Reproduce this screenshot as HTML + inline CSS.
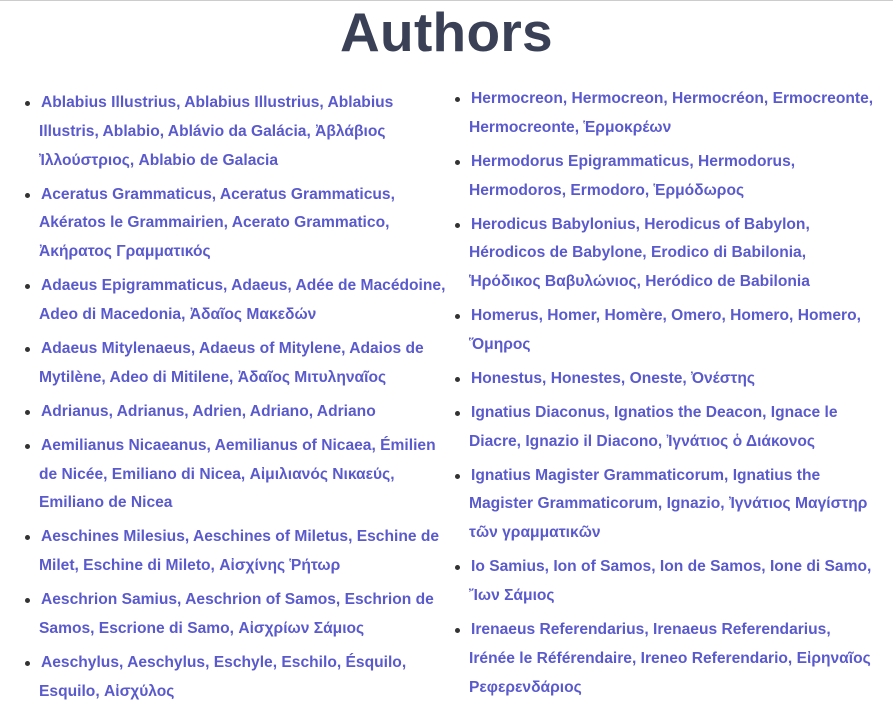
<!DOCTYPE html>
<html><head><meta charset="utf-8"><style>
html,body{margin:0;padding:0;background:#fff;width:893px;height:701px;overflow:hidden;position:relative}
body{border-top:1px solid #ccc;box-sizing:border-box}
h1{position:absolute;left:0;width:893px;top:-4px;margin:0;text-align:center;font:bold 55px/70px "Liberation Sans",sans-serif;color:#3a4156;letter-spacing:0.3px}
ul{position:absolute;margin:0;padding:0;list-style:none;font:bold 15.6px/28.8px "Liberation Sans","DejaVu Sans",sans-serif;color:#5a5acd}
li{position:relative;margin-bottom:5.2px;white-space:nowrap}
li:before{content:"";position:absolute;left:-14px;top:12px;width:5px;height:5px;border-radius:50%;background:#333}
li span{display:block}
li span:first-child{padding-left:2px}
.l{left:39px;top:88px}
.r{left:469px;top:84px}
</style></head><body>
<h1>Authors</h1>
<ul class="l">
<li><span>Ablabius Illustrius, Ablabius Illustrius, Ablabius</span><span>Illustris, Ablabio, Ablávio da Galácia, Ἀβλάβιος</span><span>Ἰλλούστριος, Ablabio de Galacia</span></li>
<li><span>Aceratus Grammaticus, Aceratus Grammaticus,</span><span>Akératos le Grammairien, Acerato Grammatico,</span><span>Ἀκήρατος Γραμματικός</span></li>
<li><span>Adaeus Epigrammaticus, Adaeus, Adée de Macédoine,</span><span>Adeo di Macedonia, Ἀδαῖος Μακεδών</span></li>
<li><span>Adaeus Mitylenaeus, Adaeus of Mitylene, Adaios de</span><span>Mytilène, Adeo di Mitilene, Ἀδαῖος Μιτυληναῖος</span></li>
<li><span>Adrianus, Adrianus, Adrien, Adriano, Adriano</span></li>
<li><span>Aemilianus Nicaeanus, Aemilianus of Nicaea, Émilien</span><span>de Nicée, Emiliano di Nicea, Αἰμιλιανός Νικαεύς,</span><span>Emiliano de Nicea</span></li>
<li><span>Aeschines Milesius, Aeschines of Miletus, Eschine de</span><span>Milet, Eschine di Mileto, Αἰσχίνης Ῥήτωρ</span></li>
<li><span>Aeschrion Samius, Aeschrion of Samos, Eschrion de</span><span>Samos, Escrione di Samo, Αἰσχρίων Σάμιος</span></li>
<li><span>Aeschylus, Aeschylus, Eschyle, Eschilo, Ésquilo,</span><span>Esquilo, Αἰσχύλος</span></li>
</ul>
<ul class="r">
<li><span>Hermocreon, Hermocreon, Hermocréon, Ermocreonte,</span><span>Hermocreonte, Ἑρμοκρέων</span></li>
<li><span>Hermodorus Epigrammaticus, Hermodorus,</span><span>Hermodoros, Ermodoro, Ἑρμόδωρος</span></li>
<li><span>Herodicus Babylonius, Herodicus of Babylon,</span><span>Hérodicos de Babylone, Erodico di Babilonia,</span><span>Ἡρόδικος Βαβυλώνιος, Heródico de Babilonia</span></li>
<li><span>Homerus, Homer, Homère, Omero, Homero, Homero,</span><span>Ὅμηρος</span></li>
<li><span>Honestus, Honestes, Oneste, Ὀνέστης</span></li>
<li><span>Ignatius Diaconus, Ignatios the Deacon, Ignace le</span><span>Diacre, Ignazio il Diacono, Ἰγνάτιος ὁ Διάκονος</span></li>
<li><span>Ignatius Magister Grammaticorum, Ignatius the</span><span>Magister Grammaticorum, Ignazio, Ἰγνάτιος Μαγίστηρ</span><span>τῶν γραμματικῶν</span></li>
<li><span>Io Samius, Ion of Samos, Ion de Samos, Ione di Samo,</span><span>Ἴων Σάμιος</span></li>
<li><span>Irenaeus Referendarius, Irenaeus Referendarius,</span><span>Irénée le Référendaire, Ireneo Referendario, Εἰρηναῖος</span><span>Ρεφερενδάριος</span></li>
</ul>
</body></html>
